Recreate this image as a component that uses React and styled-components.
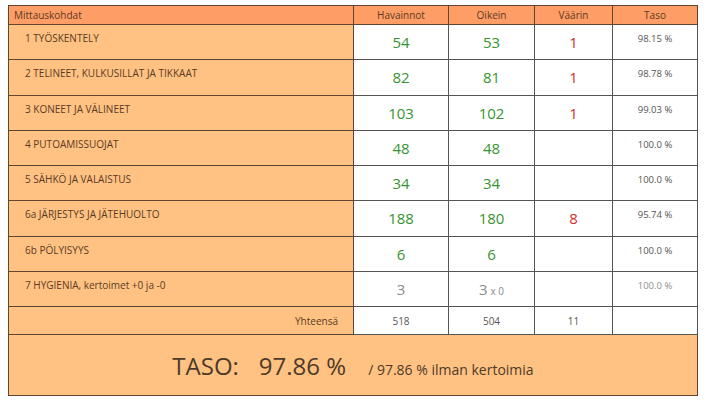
import React from "react";
import styled, { createGlobalStyle } from "styled-components";

const GlobalStyle = createGlobalStyle`
  html, body {
    margin: 0;
    padding: 0;
    background: #ffffff;
  }
  body {
    font-family: "Open Sans", "Liberation Sans", sans-serif;
  }
`;

const Page = styled.div`
  padding: 5px 8px;
`;

const Table = styled.table`
  width: 689px;
  table-layout: fixed;
  border-collapse: collapse;
  border: 1px solid #5e4630;
`;

const HeadCell = styled.th`
  height: 18px;
  padding: 0 ${(p) => (p.$left ? "5px" : "0")};
  background: #ff9d66;
  color: #5b3a24;
  font-size: 10px;
  font-weight: 400;
  text-align: ${(p) => (p.$left ? "left" : "center")};
  border: 1px solid #5e4630;
`;

const Row = styled.tr`
  height: ${(p) => p.$h || 35.25}px;
`;

const LabelCell = styled.td`
  background: #ffc283;
  color: #5b3a24;
  font-size: 10px;
  vertical-align: ${(p) => (p.$right ? "middle" : "top")};
  text-align: ${(p) => (p.$right ? "right" : "left")};
  padding: ${(p) => (p.$right ? "0 15px 0 0" : "6px 16px 0")};
  border: 1px solid #5e4630;
  border-left: none;
`;

const NumCell = styled.td`
  background: #ffffff;
  text-align: center;
  vertical-align: middle;
  font-size: ${(p) => (p.$small ? "10px" : "15px")};
  color: ${(p) =>
    p.$tone === "ok" ? "#36942f" : p.$tone === "bad" ? "#d0302f" : p.$tone === "muted" ? "#8a8a8a" : "#555555"};
  border: 1px solid #555555;
  padding: 0;
`;

const Mult = styled.span`
  font-size: 10px;
  margin-left: 3px;
`;

const PctCell = styled.td`
  background: #ffffff;
  text-align: center;
  vertical-align: top;
  padding: 7px 0 0;
  font-size: 9.5px;
  color: ${(p) => (p.$muted ? "#8e8e8e" : "#555555")};
  border: 1px solid #555555;
`;

const TotalCell = styled.td`
  background: #ffc283;
  border-top: 1px solid #5e4630;
  text-align: center;
  vertical-align: middle;
  color: #4e3a28;
  padding: 0;
`;

const Big = styled.span`
  font-size: 24px;
  margin-right: ${(p) => p.$gap || 0}px;
`;

const Small = styled.span`
  font-size: 14px;
  margin-left: 22px;
`;

const rows = [
  { label: "1 TYÖSKENTELY", h: 54, o: 53, v: 1, p: "98.15 %" },
  { label: "2 TELINEET, KULKUSILLAT JA TIKKAAT", h: 82, o: 81, v: 1, p: "98.78 %" },
  { label: "3 KONEET JA VÄLINEET", h: 103, o: 102, v: 1, p: "99.03 %" },
  { label: "4 PUTOAMISSUOJAT", h: 48, o: 48, v: null, p: "100.0 %" },
  { label: "5 SÄHKÖ JA VALAISTUS", h: 34, o: 34, v: null, p: "100.0 %" },
  { label: "6a JÄRJESTYS JA JÄTEHUOLTO", h: 188, o: 180, v: 8, p: "95.74 %" },
  { label: "6b PÖLYISYYS", h: 6, o: 6, v: null, p: "100.0 %" },
];

export default function App() {
  return (
    <Page>
      <GlobalStyle />
      <Table>
        <colgroup>
          <col style={{ width: 345 }} />
          <col style={{ width: 95 }} />
          <col style={{ width: 86 }} />
          <col style={{ width: 78 }} />
          <col style={{ width: 85 }} />
        </colgroup>
        <thead>
          <tr>
            <HeadCell $left>Mittauskohdat</HeadCell>
            <HeadCell>Havainnot</HeadCell>
            <HeadCell>Oikein</HeadCell>
            <HeadCell>Väärin</HeadCell>
            <HeadCell>Taso</HeadCell>
          </tr>
        </thead>
        <tbody>
          {rows.map((r) => (
            <Row key={r.label}>
              <LabelCell>{r.label}</LabelCell>
              <NumCell $tone="ok">{r.h}</NumCell>
              <NumCell $tone="ok">{r.o}</NumCell>
              <NumCell $tone="bad">{r.v}</NumCell>
              <PctCell>{r.p}</PctCell>
            </Row>
          ))}
          <Row>
            <LabelCell>7 HYGIENIA, kertoimet +0 ja -0</LabelCell>
            <NumCell $tone="muted">3</NumCell>
            <NumCell $tone="muted">
              3<Mult>x 0</Mult>
            </NumCell>
            <NumCell />
            <PctCell $muted>100.0 %</PctCell>
          </Row>
          <Row $h={28}>
            <LabelCell $right>Yhteensä</LabelCell>
            <NumCell $small>518</NumCell>
            <NumCell $small>504</NumCell>
            <NumCell $small>11</NumCell>
            <NumCell />
          </Row>
          <Row $h={61}>
            <TotalCell colSpan={5}>
              <Big $gap={20}>TASO:</Big>
              <Big>97.86 %</Big>
              <Small>/ 97.86 % ilman kertoimia</Small>
            </TotalCell>
          </Row>
        </tbody>
      </Table>
    </Page>
  );
}
